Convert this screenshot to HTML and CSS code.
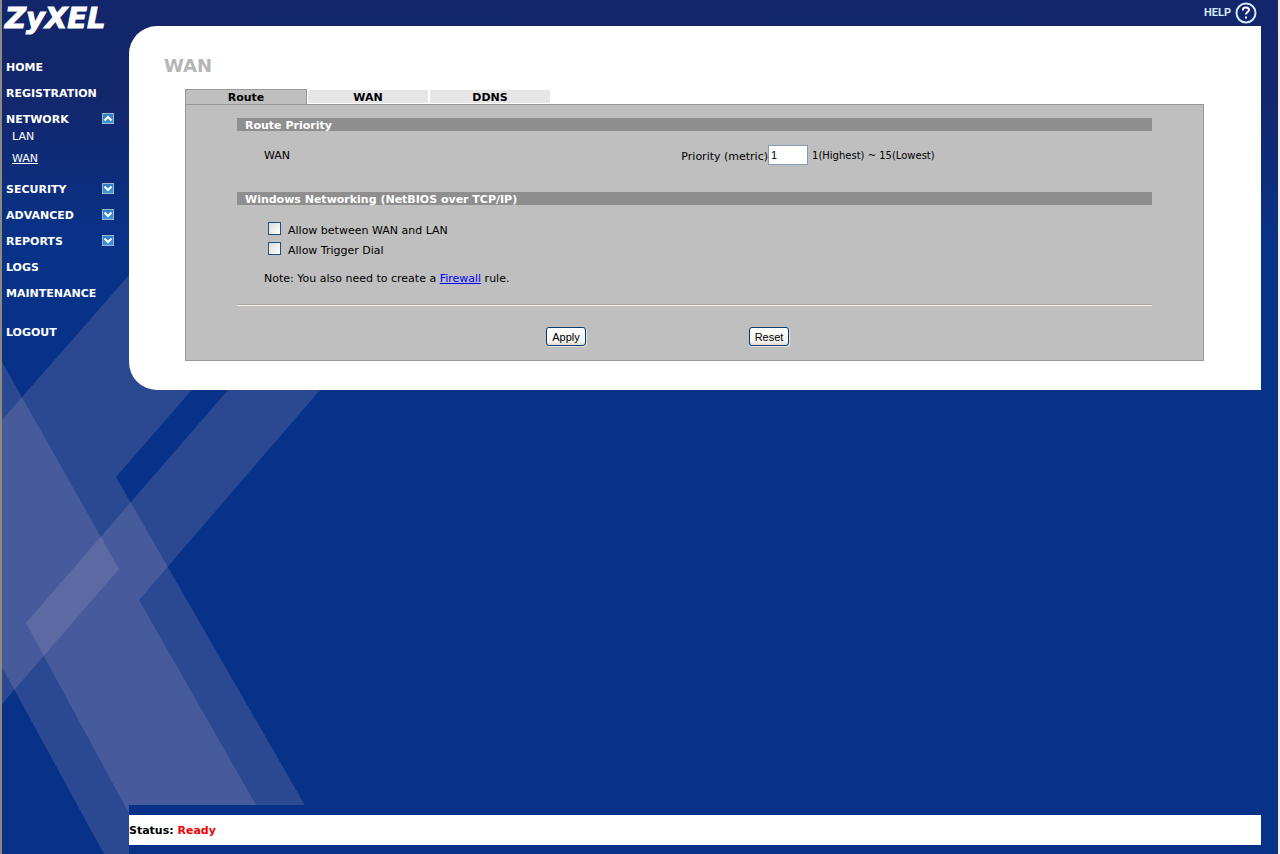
FILE: index.html
```
<!DOCTYPE html>
<html lang="en">
<head>
    <meta charset="UTF-8">
    <meta name="viewport" content="width=device-width, initial-scale=1.0">
    <title>ZyXEL - WAN</title>
    <link rel="stylesheet" href="styles.css">
</head>
<body>
    <svg class="backdrop" width="340" height="854" viewBox="0 0 340 854" aria-hidden="true">
        <g fill="#b8a5c3" fill-opacity="0.2">
            <path d="M2 362 119 569 2 704z"/>
            <path d="M2 420 129 275H292L116 477 333 854H104L2 667z"/>
            <path d="M26 623 228 390H320L139 600 284 854H151z"/>
        </g>
    </svg>

    <aside class="sidebar">
        <a class="logo" href="#">ZyXEL</a>
        <nav class="menu">
            <div class="menu-item"><a href="#">HOME</a></div>
            <div class="menu-item"><a href="#">REGISTRATION</a></div>
            <div class="menu-item">
                <a href="#">NETWORK</a>
                <button class="toggle" type="button" aria-label="Collapse Network">
                    <svg width="12" height="11" viewBox="0 0 12 11"><path d="M2.5 7.5 6 4l3.5 3.5" fill="none" stroke="#fff" stroke-width="2"/></svg>
                </button>
            </div>
            <div class="submenu">
                <a href="#">LAN</a>
                <a class="current" href="#">WAN</a>
            </div>
            <div class="menu-item">
                <a href="#">SECURITY</a>
                <button class="toggle" type="button" aria-label="Expand Security">
                    <svg width="12" height="11" viewBox="0 0 12 11"><path d="M2.5 3.5 6 7l3.5-3.5" fill="none" stroke="#fff" stroke-width="2"/></svg>
                </button>
            </div>
            <div class="menu-item">
                <a href="#">ADVANCED</a>
                <button class="toggle" type="button" aria-label="Expand Advanced">
                    <svg width="12" height="11" viewBox="0 0 12 11"><path d="M2.5 3.5 6 7l3.5-3.5" fill="none" stroke="#fff" stroke-width="2"/></svg>
                </button>
            </div>
            <div class="menu-item">
                <a href="#">REPORTS</a>
                <button class="toggle" type="button" aria-label="Expand Reports">
                    <svg width="12" height="11" viewBox="0 0 12 11"><path d="M2.5 3.5 6 7l3.5-3.5" fill="none" stroke="#fff" stroke-width="2"/></svg>
                </button>
            </div>
            <div class="menu-item"><a href="#">LOGS</a></div>
            <div class="menu-item"><a href="#">MAINTENANCE</a></div>
            <div class="menu-item logout"><a href="#">LOGOUT</a></div>
        </nav>
    </aside>

    <div class="main">
        <header class="topbar">
            <a class="help" href="#">HELP
                <svg width="22" height="22" viewBox="0 0 22 22" aria-hidden="true">
                    <circle cx="11" cy="11" r="9.5" fill="#13266b" stroke="#d3ebfb" stroke-width="2"/>
                    <path d="M8 8.5V7.5C8 6 9.3 5.5 11 5.5s3 .8 3 2.500c0 2-3 2.200-3 4.500" fill="none" stroke="#fff" stroke-width="2"/>
                    <path d="M10 14.500h2v2h-2z" fill="#fff"/>
                </svg>
            </a>
        </header>

        <main class="content">
            <h1>WAN</h1>
            <nav class="tabs">
                <a class="tab active" href="#">Route</a>
                <a class="tab" href="#">WAN</a>
                <a class="tab" href="#">DDNS</a>
            </nav>
            <form class="panel">
                <h2>Route Priority</h2>
                <div class="priority">
                    <span>WAN</span>
                    <div class="metric">
                        <label for="metric">Priority (metric)</label>
                        <input type="text" id="metric" value="1">
                        <small>1(Highest) ~ 15(Lowest)</small>
                    </div>
                </div>

                <h2>Windows Networking (NetBIOS over TCP/IP)</h2>
                <div class="options">
                    <label class="check"><input type="checkbox"> Allow between WAN and LAN</label>
                    <label class="check"><input type="checkbox"> Allow Trigger Dial</label>
                </div>
                <p class="note">Note: You also need to create a <a href="#">Firewall</a> rule.</p>
                <hr>
                <div class="actions">
                    <button type="button">Apply</button>
                    <button type="reset">Reset</button>
                </div>
            </form>
        </main>

        <footer class="footer">
            <div class="status">Status: <span>Ready</span></div>
        </footer>
    </div>
</body>
</html>
```
FILE: styles.css
```
* {
    box-sizing: border-box;
}

body {
    margin: 0;
    min-height: 100vh;
    display: flex;
    position: relative;
    border-left: 2px solid #8d8a7c;
    border-right: 2px solid #f1efe2;
    background: linear-gradient(to bottom, #13266b 0, #13276d 100px, #083288 240px);
    font-family: Verdana, "DejaVu Sans", sans-serif;
    font-size: 11px;
    line-height: 14px;
    color: #000;
}

a {
    color: inherit;
    text-decoration: none;
}

.backdrop {
    position: absolute;
    top: 0;
    left: -2px;
}

/* left menu */
.sidebar {
    position: relative;
    flex: 0 0 127px;
    color: #fff;
}

.logo {
    display: block;
    height: 61px;
    padding-left: 3px;
    font-size: 29px;
    line-height: 36px;
    font-weight: bold;
    font-style: italic;
    -webkit-text-stroke: 1px #fff;
}

.menu {
    padding-left: 4px;
}

.menu-item {
    display: flex;
    justify-content: space-between;
    align-items: flex-start;
    height: 14px;
    margin-bottom: 12px;
    padding-right: 15px;
    font-weight: bold;
}

.toggle {
    display: block;
    width: 12px;
    height: 11px;
    padding: 0;
    border: 0;
    background: linear-gradient(#2a78c4, #3d9be0);
    outline: 1px solid #9fb4c4;
    outline-offset: -1px;
    cursor: pointer;
}

.toggle svg {
    display: block;
}

.submenu {
    display: flex;
    flex-direction: column;
    align-items: flex-start;
    gap: 8px;
    margin: -9px 0 17px;
    padding-left: 6px;
}

.submenu .current {
    text-decoration: underline;
}

.logout {
    margin-top: 25px;
}

/* right side */
.main {
    position: relative;
    flex: 1;
    display: flex;
    flex-direction: column;
    padding-right: 17px;
}

.topbar {
    display: flex;
    justify-content: flex-end;
    height: 26px;
    padding: 2px 4px 0 0;
}

.help {
    display: flex;
    align-items: center;
    gap: 4px;
    height: 22px;
    font-family: Roboto, sans-serif;
    font-weight: bold;
    color: #d3ebfb;
}

.content {
    padding: 29px 57px 29px 56px;
    border-radius: 28px 0 0 28px;
    background: #fff;
}

h1 {
    margin: 0 0 12px -21px;
    font-size: 18px;
    line-height: 22px;
    color: #b5b5b5;
}

.tabs {
    display: flex;
    gap: 2px;
}

.tab {
    width: 120px;
    height: 13px;
    margin: 1px 0;
    line-height: 16px;
    font-weight: bold;
    text-align: center;
    background: #e6e6e6;
}

.tab.active {
    width: 122px;
    height: 15px;
    margin: 0 -1px 0 0;
    border: 1px solid #989898;
    border-bottom: 0;
    background: #bfbfbf;
}

.panel {
    padding: 13px 51px 14px;
    border: 1px solid #989898;
    background: #bfbfbf;
}

h2 {
    height: 13px;
    margin: 0;
    padding-left: 8px;
    font-size: 11px;
    line-height: 16px;
    color: #fff;
    background: #8e8e8e;
}

.priority {
    display: flex;
    align-items: center;
    height: 61px;
    padding: 0 0 13px 27px;
}

.priority > span {
    width: 47%;
    padding-top: 2px;
}

.metric {
    display: flex;
    align-items: center;
}

.metric label {
    padding-top: 4px;
}

.metric input {
    width: 40px;
    height: 20px;
    margin-right: 4px;
    padding: 0 2px;
    border: 1px solid #7f9db9;
    background: #fff;
    font: 11px "Liberation Sans", Arial, sans-serif;
}

.metric small {
    padding-top: 2px;
    font-size: 10px;
}

.options {
    display: flex;
    flex-direction: column;
    gap: 2px;
    padding: 17px 0 0 31px;
}

.check {
    display: flex;
    align-items: flex-start;
    gap: 7px;
    line-height: 18px;
}

.check input {
    appearance: none;
    width: 13px;
    height: 13px;
    margin: 0;
    border: 1px solid #1c5180;
    background: linear-gradient(135deg, #dcdcd7, #fff);
}

.note {
    margin: 12px 0 18px 27px;
}

.note a {
    color: #0000ff;
    text-decoration: underline;
}

hr {
    height: 2px;
    margin: 0;
    border: 0;
    border-top: 1px solid #aca899;
    border-bottom: 1px solid #f1efe2;
}

.actions {
    display: flex;
    justify-content: center;
    gap: 163px;
    padding: 21px 54px 0 0;
}

.actions button {
    width: 40px;
    height: 19px;
    padding: 0;
    border: 1px solid #003c74;
    border-radius: 3px;
    background: linear-gradient(#fff, #f3f3ee 80%, #dedcd0);
    box-shadow: 1px 1px 0 #e4e4e0;
    font: 11px "Liberation Sans", Arial, sans-serif;
}

.footer {
    margin-top: auto;
    margin-right: -17px;
    padding: 10px 17px 9px 0;
    background: #083288;
}

.status {
    height: 30px;
    line-height: 32px;
    font-weight: bold;
    background: #fff;
}

.status span {
    color: #f00000;
}
```
